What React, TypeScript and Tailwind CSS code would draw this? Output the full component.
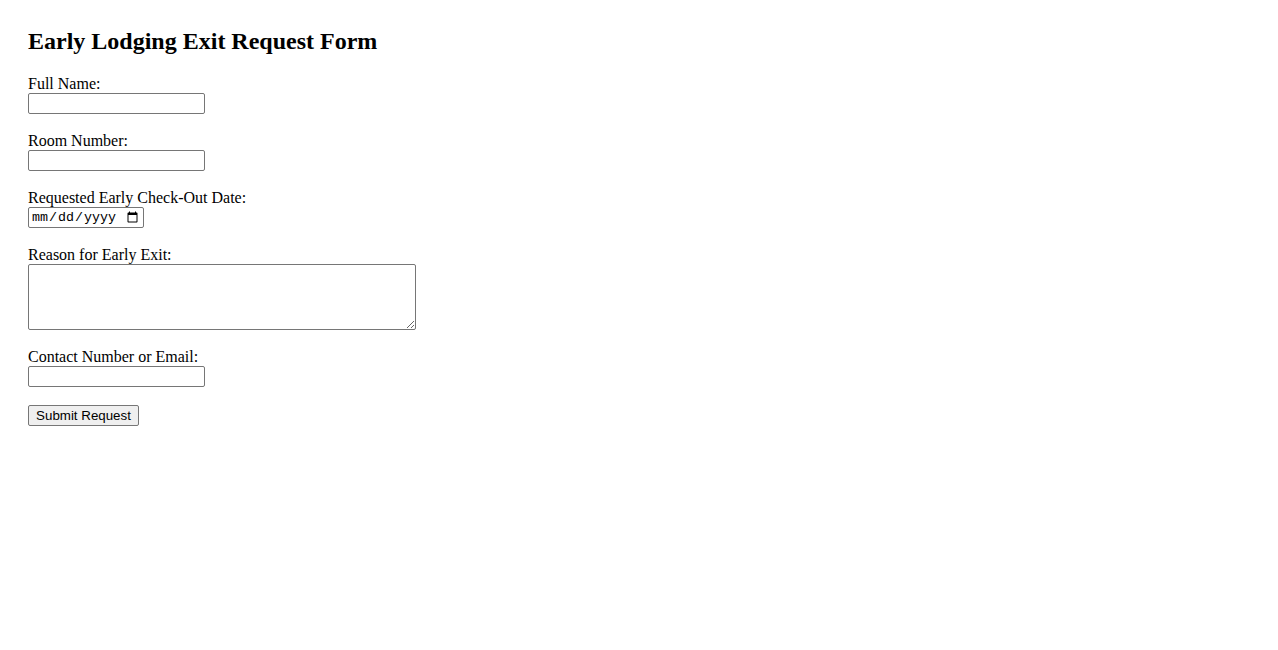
import React from 'react';

/**
 * Early lodging exit request form, plain browser look.
 */
const fields = [
  { id: 'fullName', label: 'Full Name:' },
  { id: 'roomNumber', label: 'Room Number:' },
];

const inputClass =
  "block h-[21px] w-[177px] border border-[#767676] rounded-[2px] bg-white px-[2px] py-[1px] text-[13.33px] font-['Liberation_Sans',sans-serif] text-black";

const App: React.FC = () => {
  return (
    <div className="min-h-screen bg-white pl-[28px] pt-[27px] font-['Liberation_Serif',serif] text-[16px] text-black">
      <h2 className="mb-5 text-[24px] font-bold leading-[28px]">Early Lodging Exit Request Form</h2>
      <form onSubmit={(e) => e.preventDefault()}>
        {fields.map((f) => (
          <div key={f.id} className="mb-[18px]">
            <label htmlFor={f.id} className="block leading-[18px]">{f.label}</label>
            <input id={f.id} type="text" className={inputClass} />
          </div>
        ))}

        <div className="mb-[18px]">
          <label htmlFor="checkout" className="block leading-[18px]">Requested Early Check-Out Date:</label>
          <input
            id="checkout"
            type="date"
            className="block h-[21px] w-[116px] border border-[#767676] rounded-[2px] bg-white px-[2px] py-[1px] text-[13.33px] font-['Liberation_Mono',monospace] text-black"
          />
        </div>

        <div className="mb-[18px]">
          <label htmlFor="reason" className="block leading-[18px]">Reason for Early Exit:</label>
          <textarea
            id="reason"
            className="block h-[66px] w-[388px] border border-[#767676] rounded-[2px] bg-white px-[2px] py-[2px] text-[13.33px] font-['Liberation_Mono',monospace] text-black"
          />
        </div>

        <div className="mb-[18px]">
          <label htmlFor="contact" className="block leading-[18px]">Contact Number or Email:</label>
          <input id="contact" type="text" className={inputClass} />
        </div>

        <button
          type="submit"
          className="block h-[21px] w-[111px] border border-[#767676] rounded-[2px] bg-[#efefef] px-[6px] text-[13.33px] leading-[15px] font-['Liberation_Sans',sans-serif] text-black"
        >
          Submit Request
        </button>
      </form>
    </div>
  );
};

export default App;
